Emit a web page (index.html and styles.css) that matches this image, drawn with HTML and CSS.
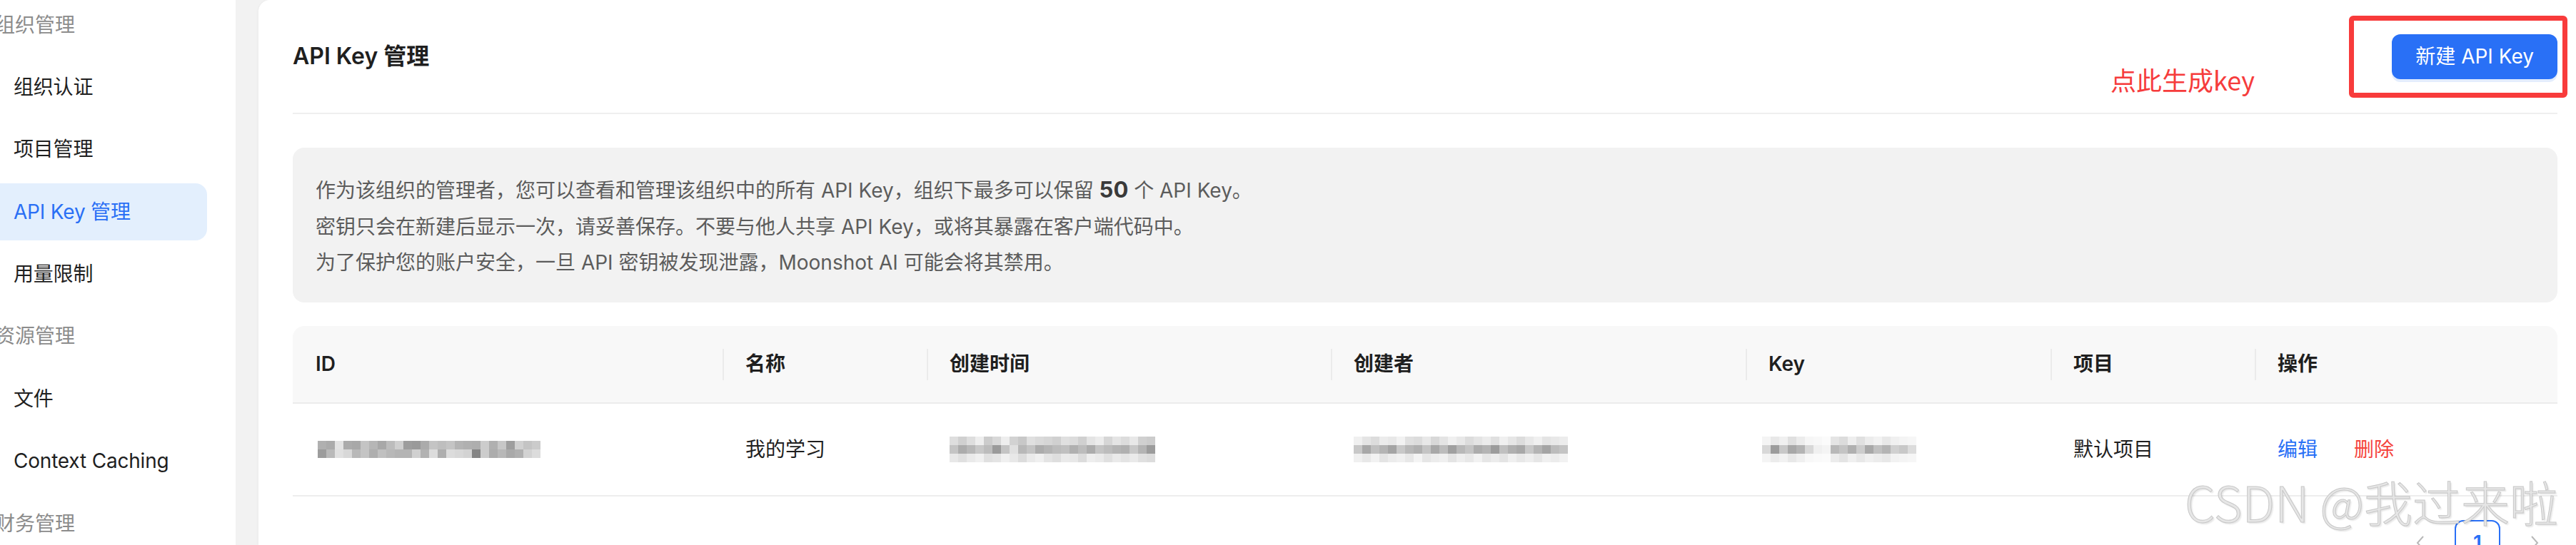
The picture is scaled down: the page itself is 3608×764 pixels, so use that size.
FILE: index.html
```html
<!DOCTYPE html>
<html lang="zh-CN">
<head>
<meta charset="utf-8">
<title>API Key 管理</title>
<link rel="stylesheet" href="styles.css">
</head>
<body>
<div class="app">
  <aside class="sidebar">
    <div class="nav-group">组织管理</div>
    <div class="nav-item">组织认证</div>
    <div class="nav-item">项目管理</div>
    <div class="nav-item active">API Key 管理</div>
    <div class="nav-item">用量限制</div>
    <div class="nav-group">资源管理</div>
    <div class="nav-item">文件</div>
    <div class="nav-item">Context Caching</div>
    <div class="nav-group">财务管理</div>
  </aside>
  <main class="main">
    <section class="card">
      <header class="card-head">
        <h1 class="title">API Key 管理</h1>
        <button class="btn-primary">新建 API Key</button>
      </header>
      <div class="notice">
        <p>作为该组织的管理者，您可以查看和管理该组织中的所有 API Key，组织下最多可以保留 <b>50</b> 个 API Key。</p>
        <p>密钥只会在新建后显示一次，请妥善保存。不要与他人共享 API Key，或将其暴露在客户端代码中。</p>
        <p>为了保护您的账户安全，一旦 API 密钥被发现泄露，Moonshot AI 可能会将其禁用。</p>
      </div>
      <table class="keys">
        <colgroup>
          <col class="c-id"><col class="c-name"><col class="c-time"><col class="c-owner"><col class="c-key"><col class="c-proj"><col class="c-op">
        </colgroup>
        <thead>
          <tr><th>ID</th><th>名称</th><th>创建时间</th><th>创建者</th><th>Key</th><th>项目</th><th>操作</th></tr>
        </thead>
        <tbody>
          <tr>
            <td><div class="mosaic m-id"><i class="r1"></i><i class="r2"></i></div></td>
            <td>我的学习</td>
            <td><div class="mosaic m-time"><i class="r1"></i><i class="r2"></i><i class="r3"></i></div></td>
            <td><div class="mosaic m-owner"><i class="r1"></i><i class="r2"></i><i class="r3"></i></div></td>
            <td><div class="mosaic m-key"><i class="r1"></i><i class="r2"></i><i class="r3"></i></div></td>
            <td>默认项目</td>
            <td><span class="link">编辑</span><span class="link danger">删除</span></td>
          </tr>
        </tbody>
      </table>
      <nav class="pager">
        <span class="pg-arrow"><svg width="14" height="24" viewBox="0 0 14 24"><path d="M11 3 L3 12 L11 21" fill="none" stroke="#b8b8b8" stroke-width="2"/></svg></span>
        <span class="pg-item current">1</span>
        <span class="pg-arrow"><svg width="14" height="24" viewBox="0 0 14 24"><path d="M3 3 L11 12 L3 21" fill="none" stroke="#b8b8b8" stroke-width="2"/></svg></span>
      </nav>
    </section>
  </main>
</div>
<div class="annot-box"></div>
<div class="annot-text">点此生成key</div>
<div class="watermark">CSDN @我过来啦</div>
</body>
</html>
```

FILE: styles.css
```css
* { box-sizing: border-box; margin: 0; padding: 0; }
html, body { width: 3608px; height: 764px; overflow: hidden; background: #fff; }
body {
  font-family: Inter, "Noto Sans CJK SC", sans-serif;
  font-size: 28px;
  color: #1f1f1f;
  position: relative;
}
.app { display: flex; height: 764px; }

/* sidebar */
.sidebar {
  width: 330px; flex: none;
  display: flex; flex-direction: column; gap: 7.4px;
  margin-top: -5.5px;
  background: #fff;
}
.nav-group, .nav-item { height: 80px; flex: none; display: flex; align-items: center; line-height: 1; }
.nav-group { color: #8c8c8c; margin-left: -7px; }
.nav-item { margin-left: -20px; width: 310px; padding-left: 39px; border-radius: 16px; color: #1f1f1f; letter-spacing: -0.2px; }
.nav-item.active { background: #e3effd; color: #2a6ff5; }

/* main */
.main { flex: 1; min-width: 0; background: #f2f2f2; padding-left: 32px; display: flex; }
.card {
  flex: 1; min-width: 0;
  background: #fff;
  border-radius: 16px 0 0 0;
  padding: 0 26px 0 48px;
  box-shadow: -1px 0 3px rgba(0,0,0,0.03);
}
.card-head {
  height: 160px;
  border-bottom: 2px solid #efefef;
  display: flex; align-items: center; justify-content: space-between;
}
.title { font-size: 32px; font-weight: 600; line-height: 1; color: #1f1f1f; }
.btn-primary {
  height: 63px; padding: 0 33px;
  border: none; border-radius: 12px;
  background: #2970f6; color: #fff;
  font-family: inherit; font-size: 28px; line-height: 1;
  box-shadow: 0 4px 0 #e3edfd;
}

/* notice */
.notice {
  margin-top: 47px;
  background: #f2f2f2;
  border-radius: 16px;
  padding: 34px 32px 30px;
  color: #5c5c5c;
  line-height: 50.6px;
}
.notice b { font-size: 31px; font-weight: 700; color: #3a3a3a; }

/* table */
.keys { width: 100%; margin-top: 33px; border-collapse: separate; border-spacing: 0; table-layout: fixed; }
.c-id { width: 602px; } .c-name { width: 286px; } .c-time { width: 566px; } .c-owner { width: 581px; }
.c-key { width: 427px; } .c-proj { width: 286px; } .c-op { width: 424px; }
.keys th {
  height: 109px; padding: 0 32px;
  background: #f8f8f8;
  border-bottom: 2px solid #ececec;
  text-align: left; font-weight: 600; line-height: 1;
  position: relative;
}
.keys th:first-child { border-top-left-radius: 16px; }
.keys th:last-child { border-top-right-radius: 16px; }
.keys th + th::before {
  content: ""; position: absolute; left: 0; top: 32px;
  width: 2px; height: 44px; background: #ebebeb;
}
.keys td {
  height: 130px; padding: 0 32px;
  border-bottom: 2px solid #ededed;
  line-height: 1;
}
.link { color: #2970f6; margin-right: 51px; }
.link.danger { color: #f5453d; }

/* mosaic (redacted values) */
.mosaic { display: flex; flex-direction: column; }
.mosaic i { display: block; height: 12px; }
.m-id { margin-left: 3px; width: 312px; }
.m-id .r1 { background: linear-gradient(90deg, #b0b0b0 0 12px, #ababab 0 24px, #e3e3e3 0 36px, #ababab 0 48px, #a8a8a8 0 60px, #c4c4c4 0 72px, #b6b6b6 0 84px, #a8a8a8 0 96px, #bcbcbc 0 108px, #cfcfcf 0 120px, #9d9d9d 0 132px, #9a9a9a 0 144px, #ababab 0 156px, #c4c4c4 0 168px, #bebebe 0 180px, #c4c4c4 0 192px, #b4b4b4 0 204px, #b0b0b0 0 216px, #aeaeae 0 228px, #cccccc 0 240px, #b0b0b0 0 252px, #c7c7c7 0 264px, #9e9e9e 0 276px, #d0d0d0 0 288px, #c4c4c4 0 300px, #cbcbcb 0 312px); }
.m-id .r2 { background: linear-gradient(90deg, #9c9c9c 0 12px, #b9b9b9 0 24px, #e0e0e0 0 36px, #d8d8d8 0 48px, #b8b8b8 0 60px, #c4c4c4 0 72px, #aeaeae 0 84px, #c0c0c0 0 96px, #b8b8b8 0 108px, #b4b4b4 0 120px, #b4b4b4 0 132px, #d0d0d0 0 144px, #b2b2b2 0 156px, #dcdcdc 0 168px, #aeaeae 0 180px, #dcdcdc 0 192px, #d8d8d8 0 204px, #d3d3d3 0 216px, #858585 0 228px, #cccccc 0 240px, #acacac 0 252px, #b8b8b8 0 264px, #a9a9a9 0 276px, #b0b0b0 0 288px, #d2d2d2 0 300px, #dcdcdc 0 312px); }
.m-time { width: 288px; }
.m-time .r1 { background: linear-gradient(90deg, #dedede 0 12px, #d0d0d0 0 24px, #dedede 0 36px, #eeeeee 0 48px, #cccccc 0 60px, #d8d8d8 0 72px, #eeeeee 0 84px, #d2d2d2 0 96px, #c8c8c8 0 108px, #e0e0e0 0 120px, #dadada 0 132px, #d6d6d6 0 144px, #d0d0d0 0 156px, #e0e0e0 0 168px, #dcdcdc 0 180px, #d0d0d0 0 192px, #e4e4e4 0 204px, #ececec 0 216px, #d6d6d6 0 228px, #e4e4e4 0 240px, #dcdcdc 0 252px, #e8e8e8 0 264px, #d0d0d0 0 276px, #cccccc 0 288px); }
.m-time .r2 { background: linear-gradient(90deg, #c4c4c4 0 12px, #acacac 0 24px, #b8b8b8 0 36px, #c8c8c8 0 48px, #bcbcbc 0 60px, #9a9a9a 0 72px, #c4c4c4 0 84px, #e0e0e0 0 96px, #b8b8b8 0 108px, #c4c4c4 0 120px, #acacac 0 132px, #b4b4b4 0 144px, #bcbcbc 0 156px, #c0c0c0 0 168px, #b0b0b0 0 180px, #bcbcbc 0 192px, #acacac 0 204px, #c4c4c4 0 216px, #bcbcbc 0 228px, #b4b4b4 0 240px, #b0b0b0 0 252px, #c8c8c8 0 264px, #b4b4b4 0 276px, #9c9c9c 0 288px); }
.m-time .r3 { background: linear-gradient(90deg, #e8e8e8 0 12px, #e0e0e0 0 24px, #eaeaea 0 36px, #f0f0f0 0 48px, #e0e0e0 0 60px, #e4e4e4 0 72px, #f0f0f0 0 84px, #e8e8e8 0 96px, #dcdcdc 0 108px, #eaeaea 0 120px, #f0f0f0 0 132px, #e4e4e4 0 144px, #dedede 0 156px, #eaeaea 0 168px, #e8e8e8 0 180px, #dcdcdc 0 192px, #eeeeee 0 204px, #eaeaea 0 216px, #e0e0e0 0 228px, #eaeaea 0 240px, #e4e4e4 0 252px, #eaeaea 0 264px, #e0e0e0 0 276px, #dcdcdc 0 288px); }
.m-owner { width: 300px; }
.m-owner .r1 { background: linear-gradient(90deg, #f0f0f0 0 12px, #e4e4e4 0 24px, #dcdcdc 0 36px, #ececec 0 48px, #e8e8e8 0 60px, #f2f2f2 0 72px, #e0e0e0 0 84px, #dcdcdc 0 96px, #e8e8e8 0 108px, #d8d8d8 0 120px, #e4e4e4 0 132px, #f0f0f0 0 144px, #e8e8e8 0 156px, #dcdcdc 0 168px, #e4e4e4 0 180px, #ececec 0 192px, #e0e0e0 0 204px, #f0f0f0 0 216px, #e6e6e6 0 228px, #dcdcdc 0 240px, #e8e8e8 0 252px, #f0f0f0 0 264px, #e4e4e4 0 276px, #e8e8e8 0 288px, #ececec 0 300px); }
.m-owner .r2 { background: linear-gradient(90deg, #c8c8c8 0 12px, #a8a8a8 0 24px, #c0c0c0 0 36px, #b4b4b4 0 48px, #a4a4a4 0 60px, #c8c8c8 0 72px, #b8b8b8 0 84px, #b0b0b0 0 96px, #c4c4c4 0 108px, #a8a8a8 0 120px, #bcbcbc 0 132px, #a0a0a0 0 144px, #b8b8b8 0 156px, #c4c4c4 0 168px, #acacac 0 180px, #b4b4b4 0 192px, #9c9c9c 0 204px, #c0c0c0 0 216px, #b0b0b0 0 228px, #a8a8a8 0 240px, #c8c8c8 0 252px, #b4b4b4 0 264px, #a4a4a4 0 276px, #bcbcbc 0 288px, #c4c4c4 0 300px); }
.m-owner .r3 { background: linear-gradient(90deg, #f0f0f0 0 12px, #e8e8e8 0 24px, #f2f2f2 0 36px, #e4e4e4 0 48px, #ececec 0 60px, #f0f0f0 0 72px, #e8e8e8 0 84px, #f4f4f4 0 96px, #e6e6e6 0 108px, #ececec 0 120px, #f0f0f0 0 132px, #e4e4e4 0 144px, #eeeeee 0 156px, #e8e8e8 0 168px, #f2f2f2 0 180px, #e6e6e6 0 192px, #ececec 0 204px, #e4e4e4 0 216px, #f0f0f0 0 228px, #e8e8e8 0 240px, #eeeeee 0 252px, #e6e6e6 0 264px, #f0f0f0 0 276px, #ececec 0 288px, #f2f2f2 0 300px); }
.m-key { width: 216px; margin-left: -9px; }
.m-key .r1 { background: linear-gradient(90deg, #f4f4f4 0 12px, #e8e8e8 0 24px, #f0f0f0 0 36px, #e0e0e0 0 48px, #ececec 0 60px, #f6f6f6 0 72px, #f8f8f8 0 84px, #fbfbfb 0 96px, #e4e4e4 0 108px, #dcdcdc 0 120px, #eeeeee 0 132px, #e0e0e0 0 144px, #ececec 0 156px, #f2f2f2 0 168px, #e8e8e8 0 180px, #f0f0f0 0 192px, #f4f4f4 0 204px, #f6f6f6 0 216px); }
.m-key .r2 { background: linear-gradient(90deg, #d8d8d8 0 12px, #9c9c9c 0 24px, #c8c8c8 0 36px, #a8a8a8 0 48px, #b4b4b4 0 60px, #d8d8d8 0 72px, #f0f0f0 0 84px, #f4f4f4 0 96px, #b8b8b8 0 108px, #c4c4c4 0 120px, #b0b0b0 0 132px, #cccccc 0 144px, #a8a8a8 0 156px, #c0c0c0 0 168px, #b4b4b4 0 180px, #d0d0d0 0 192px, #c8c8c8 0 204px, #dcdcdc 0 216px); }
.m-key .r3 { background: linear-gradient(90deg, #f4f4f4 0 12px, #ececec 0 24px, #f2f2f2 0 36px, #e8e8e8 0 48px, #f0f0f0 0 60px, #f8f8f8 0 72px, #fafafa 0 84px, #fbfbfb 0 96px, #ececec 0 108px, #e4e4e4 0 120px, #f0f0f0 0 132px, #e8e8e8 0 144px, #f0f0f0 0 156px, #ececec 0 168px, #e8e8e8 0 180px, #f2f2f2 0 192px, #f4f4f4 0 204px, #f6f6f6 0 216px); }

/* pagination */
.pager { margin-top: 33px; display: flex; justify-content: flex-end; gap: 16px; }
.pg-item, .pg-arrow { width: 64px; height: 64px; display: flex; align-items: center; justify-content: center; line-height: 1; }
.pg-item.current { border: 2px solid #2970f6; border-radius: 12px; color: #2970f6; font-weight: 600; }

/* annotations drawn over the screenshot */
.annot-box {
  position: absolute; left: 3290px; top: 22px; width: 306px; height: 115px;
  border: 7px solid #f83b3b; border-radius: 6px;
}
.annot-text {
  position: absolute; left: 2956px; top: 89px;
  font-size: 36px; line-height: 44px; color: #f63c3c;
  font-family: "Noto Sans CJK SC", sans-serif;
}
.watermark {
  position: absolute; left: 3060px; top: 663px;
  font-family: "Noto Sans CJK SC", sans-serif;
  font-size: 68px; line-height: 80px; font-weight: 300;
  color: #e6e6e6;
  -webkit-text-stroke: 1px #c8c8c8;
  text-shadow: 2px 2px 2px rgba(0,0,0,0.10);
  white-space: nowrap;
}
```
